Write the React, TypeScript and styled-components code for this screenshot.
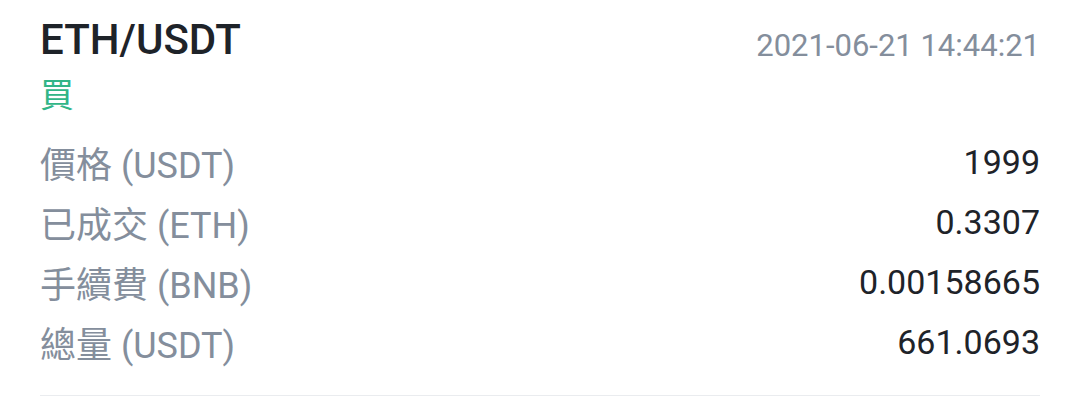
import React from 'react';
import styled, { createGlobalStyle } from 'styled-components';

const GlobalStyle = createGlobalStyle`
  html, body {
    margin: 0;
    padding: 0;
    background: #ffffff;
  }
  body {
    font-family: Roboto, "Noto Sans CJK TC", sans-serif;
  }
`;

const Card = styled.div`
  width: 1080px;
  box-sizing: border-box;
  padding: 16px 40px 0 40px;
`;

const Header = styled.div`
  display: flex;
  justify-content: space-between;
  align-items: flex-start;
`;

const Pair = styled.div`
  font-size: 42px;
  line-height: 48px;
  font-weight: 500;
  color: #1e2329;
`;

const Time = styled.div`
  margin-top: 13px;
  font-size: 31px;
  line-height: 34px;
  color: #848e9c;
`;

const Side = styled.div<{ $buy: boolean }>`
  font-family: "Noto Sans CJK TC", sans-serif;
  font-size: 34px;
  line-height: 58px;
  color: ${p => (p.$buy ? '#31b587' : '#e0475c')};
`;

const List = styled.div`
  margin-top: 10px;
  display: flex;
  flex-direction: column;
`;

const Row = styled.div`
  display: flex;
  justify-content: space-between;
  align-items: center;
  height: 60px;
`;

const Label = styled.span`
  font-family: Roboto, "Noto Sans CJK TC", sans-serif;
  font-size: 36px;
  color: #848e9c;
`;

const Value = styled.span`
  font-size: 34px;
  color: #1e2329;
`;

const Divider = styled.div`
  margin-top: 23px;
  height: 1px;
  background: #eaecef;
`;

const rows = [
  { label: '價格 (USDT)', value: '1999' },
  { label: '已成交 (ETH)', value: '0.3307' },
  { label: '手續費 (BNB)', value: '0.00158665' },
  { label: '總量 (USDT)', value: '661.0693' },
];

const App: React.FC = () => {
  return (
    <>
      <GlobalStyle />
      <Card>
        <Header>
          <Pair>ETH/USDT</Pair>
          <Time>2021-06-21 14:44:21</Time>
        </Header>
        <Side $buy>買</Side>
        <List>
          {rows.map(r => (
            <Row key={r.label}>
              <Label>{r.label}</Label>
              <Value>{r.value}</Value>
            </Row>
          ))}
        </List>
        <Divider />
      </Card>
    </>
  );
};

export default App;
